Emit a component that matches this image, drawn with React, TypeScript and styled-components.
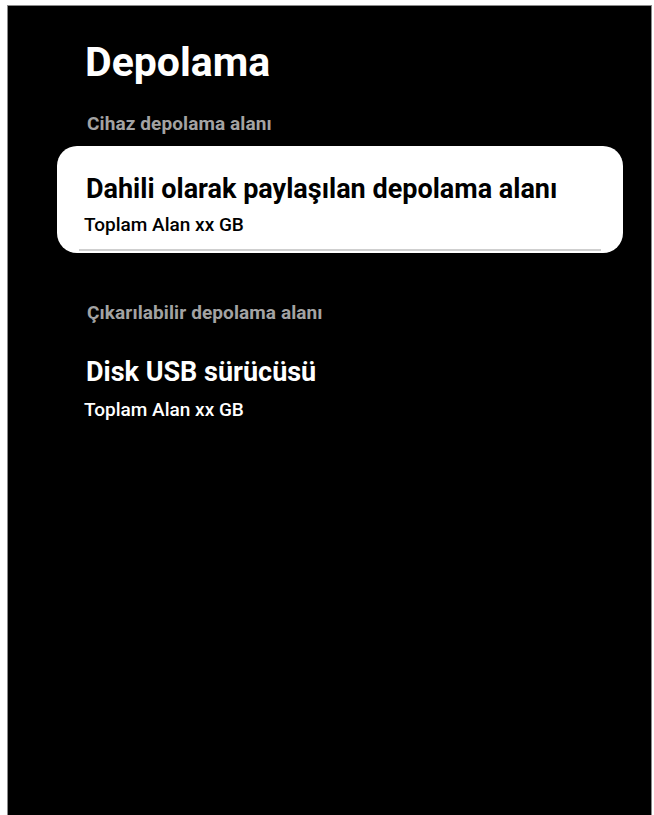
import React from "react";
import styled, { createGlobalStyle } from "styled-components";

const Global = createGlobalStyle`
  html, body { margin: 0; padding: 0; background: #ffffff; }
  body { font-family: Roboto, "Noto Sans", "Liberation Sans", sans-serif; }
  * { box-sizing: border-box; }
`;

const Screen = styled.div`
  width: 654px;
  height: 815px;
  padding: 5px 2px 0 7px;
  overflow: hidden;
  background: #ffffff;
`;

const Panel = styled.div`
  width: 645px;
  height: 820px;
  background: #000000;
  border: 1px solid #8a8a8a;
  border-bottom: none;
  padding: 32px 0 0 0;
  display: flex;
  flex-direction: column;
`;

const Title = styled.h1`
  margin: 0 0 26px 77px;
  font-size: 41px;
  line-height: 48px;
  font-weight: 700;
  color: #ffffff;
`;

const SectionLabel = styled.div<{ $gapTop?: number }>`
  margin: ${(p) => p.$gapTop ?? 0}px 0 0 79px;
  font-size: 19px;
  line-height: 24px;
  font-weight: 700;
  color: #a3a3a3;
  letter-spacing: 0.1px;
`;

const Item = styled.div<{ $focused?: boolean }>`
  position: relative;
  margin-left: 49px;
  width: 566px;
  border-radius: 20px;
  padding: ${(p) => (p.$focused ? "27px 0 16px 29px" : "31px 0 14px 29px")};
  background: ${(p) => (p.$focused ? "#ffffff" : "transparent")};
  color: ${(p) => (p.$focused ? "#000000" : "#ffffff")};
  display: flex;
  flex-direction: column;
  gap: ${(p) => (p.$focused ? 8 : 10)}px;
  ${(p) =>
    p.$focused &&
    `&::after {
      content: "";
      position: absolute;
      left: 22px;
      right: 22px;
      bottom: 2px;
      height: 2px;
      background: #cfcfcf;
    }`}
`;

const ItemTitle = styled.div`
  font-size: 27px;
  line-height: 32px;
  font-weight: 700;
`;

const ItemSub = styled.div`
  margin-left: -2px;
  font-size: 19px;
  line-height: 24px;
  font-weight: 500;
`;

export default function App() {
  return (
    <>
      <Global />
      <Screen>
        <Panel>
          <Title>Depolama</Title>
          <SectionLabel>Cihaz depolama alanı</SectionLabel>
          <div style={{ height: 10 }} />
          <Item $focused>
            <ItemTitle>Dahili olarak paylaşılan depolama alanı</ItemTitle>
            <ItemSub>Toplam Alan xx GB</ItemSub>
          </Item>
          <SectionLabel $gapTop={48}>Çıkarılabilir depolama alanı</SectionLabel>
          <Item>
            <ItemTitle>Disk USB sürücüsü</ItemTitle>
            <ItemSub>Toplam Alan xx GB</ItemSub>
          </Item>
        </Panel>
      </Screen>
    </>
  );
}
